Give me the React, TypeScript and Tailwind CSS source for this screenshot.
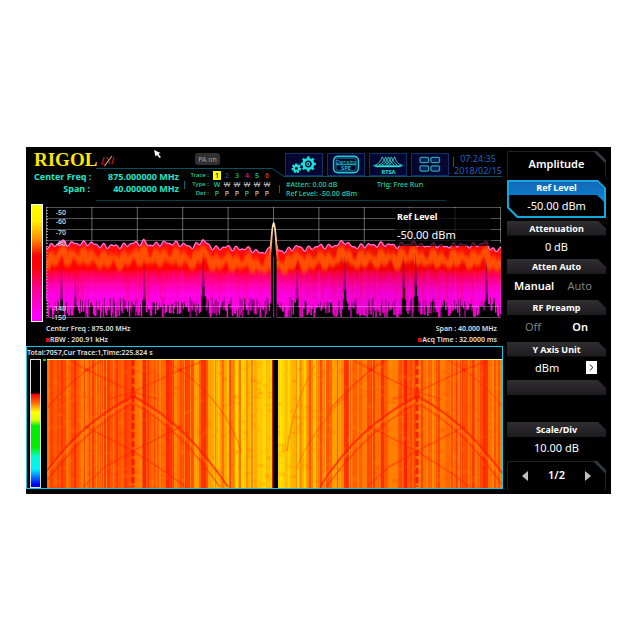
// App.tsx
import { ChevronRight } from "lucide-react";

// small seeded generator, keeps the traces stable between renders
function seeded(seed: number) {
  let s = seed;
  return () => {
    s = (s * 16807) % 2147483647;
    return s / 2147483647;
  };
}

const traces = [
  { id: "1", color: "bg-[#ffff00] text-black", type: "W", on: true, det: "text-[#19d6a8]" },
  { id: "2", color: "text-[#2450a8]", type: "W", on: false, det: "text-[#c8c8c8]" },
  { id: "3", color: "text-[#12c832]", type: "W", on: false, det: "text-[#c8c8c8]" },
  { id: "4", color: "text-[#e010d8]", type: "W", on: false, det: "text-[#19d6a8]" },
  { id: "5", color: "text-[#19d6a8]", type: "W", on: false, det: "text-[#c8c8c8]" },
  { id: "6", color: "text-[#d84a1c]", type: "W", on: false, det: "text-[#c8c8c8]" },
];

/* ---------- Spectrum data (plot is 456 x 112) ---------- */

const envelope: [number, number][] = [
  [0, 38], [14, 36], [30, 36], [50, 36], [61, 39], [80, 37], [98, 35], [108, 38], [121, 34], [134, 37],
  [148, 38], [157, 35], [170, 40], [194, 40], [214, 44], [224, 43], [233, 43], [251, 41], [275, 39],
  [299, 36], [314, 39], [334, 36], [348, 38], [358, 37], [374, 37], [394, 38], [428, 37], [442, 37],
  [450, 43], [456, 39],
];
const spikes = [
  { x: 15, top: 78 }, { x: 29, top: 86 }, { x: 98, top: 80 }, { x: 157, top: 66 }, { x: 251, top: 78 },
  { x: 299, top: 70 }, { x: 358, top: 68 }, { x: 370, top: 66 }, { x: 441, top: 72 },
];

function level(x: number) {
  let i = 0;
  while (i < envelope.length - 2 && envelope[i + 1][0] < x) i++;
  const [x0, y0] = envelope[i];
  const [x1, y1] = envelope[i + 1];
  return y0 + ((y1 - y0) * (x - x0)) / (x1 - x0);
}
const ripple = (x: number) => Math.sin(x * 0.95) * 1.3 + Math.sin(x * 0.61 + 1) * 1.5 + Math.sin(x * 0.27) * 0.8;

function buildSpectrum() {
  const rnd = seeded(71);
  const columns: { x: number; y: number; b: number; o: number }[] = [];
  const top: string[] = [];
  const mid: string[] = [];
  for (let x = 0; x <= 456; x++) {
    const lift = Math.max(0, ...spikes.map((s) => 1 - Math.abs(x - s.x) / 5));
    const y = level(x) + 1 + ripple(x) - lift * 2;
    const center = Math.abs(x - 228);
    const peak = center < 6 ? y - 27 * Math.exp(-(center * center) / 5) : y;
    top.push(`${x},${peak.toFixed(1)}`);
    mid.push(`${x},${(level(x) + 15 + ripple(x) * 2.4 - lift * 5).toFixed(1)}`);
    let b = 94 + rnd() * 18 + Math.sin(x * 0.5) * 3;
    for (const s of spikes) {
      const d = Math.abs(x - s.x);
      if (d < 3) b = Math.min(b, s.top + d * 11 + rnd() * 4);
    }
    columns.push({ x, y: peak, b: Math.min(b, 110), o: rnd() });
  }
  return { columns, top: top.join(" "), mid: mid.join(" ") };
}
const spectrum = buildSpectrum();

function SpectrumPlot() {
  return (
    <svg viewBox="0 0 456 112" preserveAspectRatio="none" className="block h-28 w-full" aria-label="Spectrum trace">
      <defs>
        <linearGradient id="density" gradientUnits="userSpaceOnUse" x1="0" y1="34" x2="0" y2="110">
          <stop offset="0" stopColor="#ff0038" />
          <stop offset="0.1" stopColor="#ff1000" />
          <stop offset="0.36" stopColor="#ff0000" />
          <stop offset="0.46" stopColor="#ff0060" />
          <stop offset="0.58" stopColor="#ff00b0" />
          <stop offset="0.7" stopColor="#ff00e8" />
          <stop offset="1" stopColor="#ff00d8" />
        </linearGradient>
        <linearGradient id="carrier" gradientUnits="userSpaceOnUse" x1="0" y1="15" x2="0" y2="56">
          <stop offset="0" stopColor="#fff4c8" />
          <stop offset="0.5" stopColor="#f8b070" />
          <stop offset="1" stopColor="#ff2000" />
        </linearGradient>
        <filter id="glow" x="-2%" y="-30%" width="104%" height="160%">
          <feGaussianBlur stdDeviation="0.6 2" />
        </filter>
      </defs>

      {/* density columns */}
      {spectrum.columns.map((c) => (
        <rect key={c.x} x={c.x} y={c.y} width="1.5" height={c.b - c.y} fill="url(#density)" />
      ))}
      <polyline points={spectrum.mid} fill="none" stroke="#ff5c00" strokeWidth="6" strokeLinejoin="round" opacity="0.85" filter="url(#glow)" />
      {spectrum.columns.map((c) =>
        c.o > 0.6 ? (
          <rect key={c.x} x={c.x} y={56 + c.o * 10} width="1" height="28" fill={c.o > 0.85 ? "#ff0030" : "#ff00c0"} opacity="0.35" />
        ) : null
      )}
      {spectrum.columns.map((c) =>
        c.o < 0.2 ? <rect key={c.x} x={c.x} y={90 + c.o * 30} width="1" height="20" fill="#000000" opacity="0.5" /> : null
      )}
      {spikes.map((s) => (
        <path key={s.x} d={`M${s.x + 0.5} ${s.top - 22} l1.6 36 l-3.2 0 z`} fill="#700060" opacity="0.6" />
      ))}

      {/* grid */}
      <g stroke="#ffffff" strokeWidth="1">
        {Array.from({ length: 11 }, (_, i) => (
          <line key={i} x1="0" x2="456" y1={i * 11 + 0.5} y2={i * 11 + 0.5} strokeOpacity={i > 3 && i < 9 ? 0.03 : 0.32} />
        ))}
        {Array.from({ length: 11 }, (_, i) => (
          <g key={i}>
            <line x1={i * 45.5 + 0.5} x2={i * 45.5 + 0.5} y1="0" y2="36" strokeOpacity="0.4" />
            <line x1={i * 45.5 + 0.5} x2={i * 45.5 + 0.5} y1="36" y2="111" strokeOpacity="0.06" />
          </g>
        ))}
      </g>
      <line x1="0" x2="0" y1="0" y2="111" stroke="#909090" strokeWidth="4" strokeDasharray="1 2" />

      <polyline points={spectrum.top} fill="none" stroke="#ff30b0" strokeWidth="1.4" />
      <polyline points={spectrum.top} fill="none" stroke="#ffc8f0" strokeWidth="0.6" />

      {/* carrier */}
      <path d="M225.5 111 V44 L227 20 L229 20 L231 44 V111 Z" fill="#000000" />
      <path d="M224 52 C226 44 226 17 228.2 16 C230.4 17 230.4 44 232.4 52" fill="none" stroke="url(#carrier)" strokeWidth="1.8" />
      <line x1="228.2" x2="228.2" y1="50" y2="111" stroke="#555555" strokeWidth="1" />
    </svg>
  );
}

/* ---------- Waterfall (plot is 455 x 129) ---------- */

function heat(v: number) {
  // 0 = red, 1 = yellow
  const g = Math.round(Math.max(0, Math.min(1, v)) * 240);
  return `rgb(255,${g},0)`;
}

function buildStripes() {
  const rnd = seeded(407);
  const out: { x: number; w: number; fill: string }[] = [];
  let x = 0;
  while (x < 455) {
    const w = 1 + Math.floor(rnd() * 3);
    const d = Math.abs(x - 226);
    const base = d < 16 ? 0.86 : d < 40 ? 0.74 : d < 62 ? 0.63 : d < 80 ? 0.52 : 0.41;
    const swing = d < 16 ? 0.2 : 0.36;
    out.push({ x, w, fill: heat(base + (rnd() - 0.5) * swing) });
    x += w;
  }
  return out;
}
const stripes = buildStripes();

function buildSpecks() {
  const rnd = seeded(93);
  return Array.from({ length: 900 }, () => ({
    x: rnd() * 455,
    y: rnd() * 128,
    w: 3 + rnd() * 4,
    light: rnd() > 0.5,
  }));
}
const specks = buildSpecks();

// fixed carriers, darker than the noise around them
const carriers = [
  { x: 11, w: 8, o: 0.4 }, { x: 27, w: 2, o: 0.7 }, { x: 37, w: 1, o: 0.5 }, { x: 45, w: 2, o: 0.6 },
  { x: 50, w: 2, o: 0.4 }, { x: 67, w: 2, o: 0.5 }, { x: 96, w: 3, o: 0.95 }, { x: 107, w: 1, o: 0.5 },
  { x: 119, w: 3, o: 0.9 }, { x: 124, w: 3, o: 0.5 }, { x: 154, w: 5, o: 0.7 }, { x: 168, w: 1, o: 0.4 },
  { x: 182, w: 2, o: 0.65 }, { x: 192, w: 2, o: 0.35 }, { x: 204, w: 2, o: 0.35 }, { x: 249, w: 1, o: 0.4 },
  { x: 262, w: 2, o: 0.5 }, { x: 273, w: 2, o: 0.6 }, { x: 279, w: 6, o: 0.45 }, { x: 297, w: 5, o: 0.75 },
  { x: 334, w: 3, o: 0.7 }, { x: 357, w: 3, o: 1 }, { x: 389, w: 2, o: 0.4 }, { x: 404, w: 2, o: 0.5 },
  { x: 425, w: 2, o: 0.4 }, { x: 436, w: 5, o: 0.75 },
];

function Chirps({ x }: { x: number }) {
  return (
    <g transform={`translate(${x} 0)`} fill="none" stroke="#ff1c00">
      <path d="M-97 128 C-70 85 -40 58 0 37 C40 58 68 88 95 128" strokeWidth="2" opacity="0.7" />
      <path d="M-94 125 C-67 88 -39 61 0 40.500 C39 61 65 90 91 127" stroke="#ff8c00" strokeWidth="1.6" opacity="0.5" />
      <path d="M-91 128 C-65 93 -38 65 0 44 C38 65 62 93 87 128" strokeWidth="1.4" opacity="0.5" />
      <path d="M-62 2 L-46 11 L0 33 L24 40 M70 2 L47 11 L0 33 L-24 40" strokeWidth="1.6" opacity="0.4" />
      <path d="M-88 52 C-76 36 -62 24 -46 11 L-30 0" strokeWidth="1.6" opacity="0.4" />
      <path d="M30 0 L47 11 C68 26 96 52 108 92" strokeWidth="1.4" opacity="0.35" />
      <path d="M-47 68 L0 92 L34 114 L53 128 M47 68 L0 92 L-28 108 L-50 128" strokeWidth="1.6" opacity="0.4" />
      <g fill="#ff1400" stroke="none" opacity="0.6">
        <circle cx="-46" cy="11" r="1.8" />
        <circle cx="47" cy="11" r="1.8" />
        <circle cx="-47" cy="68" r="1.4" />
        <circle cx="47" cy="68" r="1.4" />
        <circle cx="0" cy="36" r="3" />
      </g>
      <line x1="0" x2="0" y1="1" y2="128" strokeWidth="3" strokeDasharray="6 3" stroke="#ff0800" opacity="0.85" />
      <line x1="0" x2="0" y1="1" y2="128" strokeWidth="2" stroke="#ff2000" opacity="0.4" />
    </g>
  );
}

function WaterfallPlot() {
  return (
    <svg viewBox="0 0 455 129" preserveAspectRatio="none" className="block h-[129px] w-full" aria-label="Waterfall">
      {stripes.map((s) => (
        <rect key={s.x} x={s.x} y="0" width={s.w + 0.1} height="129" fill={s.fill} />
      ))}
      {carriers.map((c) => (
        <rect key={c.x} x={c.x} y="0" width={c.w} height="129" fill="#ff2000" opacity={c.o} />
      ))}
      {specks.map((s, i) => (
        <rect key={i} x={s.x} y={s.y} width={s.w} height="3" fill={s.light ? "#ffa000" : "#ff4000"} opacity="0.13" />
      ))}
      <path d="M240 92 C244 62 254 30 268 6" fill="none" stroke="#ff6000" strokeWidth="1.4" opacity="0.5" />
      <path d="M250 108 C262 78 288 44 330 4" fill="none" stroke="#ff3000" strokeWidth="1.4" opacity="0.3" />
      <Chirps x={86} />
      <Chirps x={370} />
      <rect x="226" y="0" width="5" height="129" fill="#000000" />
      <rect x="225" y="0" width="1" height="129" fill="#c02800" />
      <rect x="0" y="0" width="455" height="1" fill="#ffffa0" />
    </svg>
  );
}

/* ---------- Header icons ---------- */

function Gear({ cx, cy, r, body, teeth }: { cx: number; cy: number; r: number; body: number; teeth: number }) {
  return (
    <g transform={`translate(${cx} ${cy})`} stroke="#14e4dc">
      <circle r={r} fill="none" strokeWidth={body} />
      {Array.from({ length: teeth }, (_, i) => (
        <line key={i} x1="0" x2="0" y1={-r} y2={-r - body / 2 - 1.6} strokeWidth="2.6" transform={`rotate(${(360 / teeth) * i})`} />
      ))}
    </g>
  );
}

const headerButtons = [
  {
    label: "System settings",
    art: (
      <>
        <Gear cx={23} cy={10.5} r={5} body={2.8} teeth={8} />
        <circle cx="23" cy="10.5" r="1.5" fill="none" stroke="#14e4dc" strokeWidth="1.2" />
        <Gear cx={10.5} cy={15} r={2.5} body={1.8} teeth={7} />
      </>
    ),
  },
  {
    label: "Density view",
    art: (
      <>
        <rect x="5.5" y="2.5" width="26" height="17" rx="4.5" fill="none" stroke="#20c8d0" strokeWidth="1.6" />
        <rect x="8" y="4.5" width="21" height="13" rx="2.5" fill="none" stroke="#168a98" strokeWidth="0.8" />
        <path d="M8 11.2 H29" stroke="#20c8d0" strokeWidth="1" />
        <text x="18.5" y="10" textAnchor="middle" fontSize="6" fill="#20d0d8">Density</text>
        <text x="18.5" y="17" textAnchor="middle" fontSize="6" fontWeight="700" fill="#20b8c0">SPE</text>
      </>
    ),
  },
  {
    label: "Measurement mode",
    art: (
      <>
        <path d="M3 12 H34 L31 13.6 H6 Z" fill="#28e0d0" stroke="#28e0d0" strokeWidth="0.5" />
        <path
          d="M5 11.5 Q10 10.5 12.5 3 Q15 9 19 11.5 M9 11.5 Q14 9.5 16 3 Q18 9.5 22 11.5 M12 11.5 Q17 9.5 19 3 Q21 9.5 25 11.5 M16 11.5 Q20 9.5 22 3 Q24 9.5 28 11.5 M19 11.5 Q23 9 25.500 3 Q27 10.5 33 11.5"
          fill="none"
          stroke="#28e0d0"
          strokeWidth="0.9"
        />
        <text x="19" y="20.6" textAnchor="middle" fontSize="6" fontWeight="700" fill="#28e0d0">RTSA</text>
      </>
    ),
  },
  {
    label: "Window layout",
    art: (
      <g fill="#04205c" stroke="#30a0a8" strokeWidth="1.3">
        <rect x="8" y="3.5" width="9" height="5.6" rx="1.4" />
        <rect x="19.5" y="3.5" width="9" height="5.6" rx="1.4" />
        <rect x="8" y="12.4" width="9" height="5.6" rx="1.4" />
        <rect x="19.5" y="12.4" width="9" height="5.6" rx="1.4" />
      </g>
    ),
  },
];

/* ---------- Side menu ---------- */

function MenuTitle({ children }: { children?: string }) {
  return (
    <span className="flex h-[15px] w-full items-center justify-center bg-gradient-to-b from-[#302e32] to-[#1c1b1d] text-[9px] leading-none font-bold text-white [clip-path:polygon(0_0,calc(100%-8px)_0,100%_8px,100%_100%,0_100%)]">
      {children}
    </span>
  );
}

function App() {
  return (
    <div className="min-h-screen bg-white pt-[147px] pr-[29px] pl-[26px] font-['Noto_Sans','Open_Sans',sans-serif]">
      <main className="flex gap-1 bg-black pr-[5px] pb-1">
        {/* Measurement area */}
        <div className="min-w-0 flex-1">
          <header className="relative flex h-14">
            <svg viewBox="0 0 477 56" preserveAspectRatio="none" className="absolute inset-0 h-full w-full" aria-hidden="true">
              <g fill="none" stroke="#0a6478" strokeWidth="1">
                <path d="M70 21.500 H246 L258 29.500 H476" strokeOpacity="0.8" />
                <path d="M70 53.500 H420" strokeOpacity="0.6" />
                <path d="M158.500 34 V42 M253.500 38 V46 M427.500 10 V20" />
              </g>
              <path d="M128 3 L134.500 6 L132.300 7 L135 10 L133.600 11 L131 8 L129.500 9.500 Z" fill="#ffffff" />
            </svg>

            {/* Frequency */}
            <div className="relative w-[153px] shrink-0 pl-2">
              <div className="flex h-6 items-center gap-1">
                <h1 className="font-['Liberation_Serif',serif] text-[19px] leading-none font-bold text-[#ffe600]">RIGOL</h1>
                <svg viewBox="0 0 16 12" className="mt-1 h-3 w-4" aria-label="LXI">
                  <path d="M3 2 L1 9 H4 M6 2 L9 9 M13 2 L11 9" fill="none" stroke="#b01818" strokeWidth="1.2" />
                  <path d="M3.500 11 L11 1" stroke="#ff9080" strokeWidth="1.1" />
                </svg>
              </div>
              <dl className="grid grid-cols-[56px_1fr] text-right text-[9px] leading-3 font-bold text-[#1ee8c8]">
                <dt className="whitespace-nowrap">Center Freq :</dt>
                <dd className="whitespace-nowrap">875.000000 MHz</dd>
                <dt>Span :</dt>
                <dd className="whitespace-nowrap">40.000000 MHz</dd>
              </dl>
            </div>

            {/* Traces */}
            <div className="relative w-[106px] shrink-0 pl-[10px]">
              <div className="flex h-6 items-center pl-[6px]">
                <button className="h-3 w-[25px] rounded-[3px] bg-[#303030] text-[7px] leading-none text-[#a0a0a0]">PA on</button>
              </div>
              <table className="ml-px table-fixed border-collapse text-center text-[7px] leading-[9px] font-medium text-[#19d6a8]">
                <tbody>
                  <tr>
                    <th scope="row" className="w-[22px] pr-[3px] text-right text-[6px] font-medium whitespace-nowrap">Trace :</th>
                    {traces.map((t) => (
                      <td key={t.id} className="w-[10px] p-0">
                        <span className={`mx-auto block w-2 ${t.color}`}>{t.id}</span>
                      </td>
                    ))}
                  </tr>
                  <tr>
                    <th scope="row" className="pr-[3px] text-right text-[6px] font-medium whitespace-nowrap">Type :</th>
                    {traces.map((t) => (
                      <td key={t.id} className={t.on ? "p-0" : "p-0 text-[#b0b0b0] line-through"}>{t.type}</td>
                    ))}
                  </tr>
                  <tr>
                    <th scope="row" className="pr-[3px] text-right text-[6px] font-medium whitespace-nowrap">Det :</th>
                    {traces.map((t) => (
                      <td key={t.id} className={`p-0 ${t.det}`}>P</td>
                    ))}
                  </tr>
                </tbody>
              </table>
            </div>

            {/* Toolbar */}
            <div className="relative min-w-0 flex-1">
              <div className="flex gap-1 pt-[6px]">
                {headerButtons.map((b) => (
                  <button key={b.label} aria-label={b.label} className="h-[23px] w-[38px] shrink-0 border border-[#0a3070] bg-[#020630]">
                    <svg viewBox="0 0 37 22" className="h-full w-full">{b.art}</svg>
                  </button>
                ))}
                <p className="flex-1 text-center text-[9px] leading-3 whitespace-nowrap text-[#2060c8]">
                  07:24:35
                  <br />
                  2018/02/15
                </p>
              </div>
              <div className="mt-[3px] grid grid-cols-[91px_1fr] pl-px text-[7px] leading-[9px] font-medium text-[#19d6a8]">
                <span>#Atten: 0.00 dB</span>
                <span>Trig: Free Run</span>
                <span className="col-span-2">Ref Level: -50.00 dBm</span>
              </div>
            </div>
          </header>

          {/* Spectrum */}
          <section className="h-[143px]">
            <div className="flex pt-px pl-[5px]">
              <div className="h-[118px] w-3 shrink-0 border border-white bg-[linear-gradient(#ffff00,#ffee00_14%,#ff8800_30%,#ff0000_44%,#ff0010_55%,#ff0090_72%,#ff00ff_95%)]" />
              <div className="relative ml-[3px] min-w-0 flex-1 pt-[3px] pr-[2px]">
                <SpectrumPlot />
                <div className="absolute inset-y-0 left-2 flex w-3 flex-col items-end pt-1 text-[7px] leading-[9px] font-medium text-[#e0e0e0]">
                  <span>-50</span>
                  <span>-60</span>
                  <span className="mt-[2px]">-70</span>
                  <span className="mt-[2px]">-80</span>
                  <span className="mt-auto">-140</span>
                  <span>-150</span>
                </div>
                <div className="absolute top-1 right-3 h-[38px] w-24 bg-black/70 pl-[2px] text-white">
                  <p className="text-[9px] leading-[18px] font-bold">Ref Level</p>
                  <p className="text-[11px] leading-[18px]">-50.00 dBm</p>
                </div>
              </div>
            </div>
            <div className="flex justify-between pr-[6px] pl-5 text-[7px] leading-[11px] font-semibold text-[#e0e0e0]">
              <div className="pt-px">
                <p>Center Freq : 875.00 MHz</p>
                <p className="flex items-center"><i className="h-1 w-1 bg-[#e01010]" />RBW : 200.91 kHz</p>
              </div>
              <div className="pt-px text-right">
                <p>Span : 40.000 MHz</p>
                <p className="flex items-center justify-end"><i className="h-1 w-1 bg-[#e01010]" />Acq Time : 32.0000 ms</p>
              </div>
            </div>
          </section>

          {/* Waterfall */}
          <section className="border border-[#10c8e8]">
            <p className="h-3 text-[7px] leading-3 font-semibold text-[#e0e0e0]">Total:7057,Cur Trace:1,Time:225.824 s</p>
            <div className="flex pl-[3px]">
              <div className="w-[11px] shrink-0 border border-[#e0e0e0] bg-[linear-gradient(#000_26%,#ff0000_27%,#ff7000_34%,#ffff00_41%,#e0ff00_47%,#00f000_52%,#00f000_69%,#00ffd0_76%,#00f0ff_86%,#0000ff_98%)]" />
              <div className="mr-px ml-[2px] h-[2px] w-[3px] bg-[#10d020]" />
              <div className="min-w-0 flex-1">
                <WaterfallPlot />
              </div>
            </div>
          </section>
        </div>

        {/* Soft keys */}
        <aside className="flex w-[99px] shrink-0 flex-col pt-1 text-white">
          <h2 className="relative mb-[3px] flex h-[26px] items-center justify-center text-[11px] font-semibold">
            Amplitude
            <svg viewBox="0 0 99 26" preserveAspectRatio="none" className="absolute inset-0 h-full w-full" aria-hidden="true">
              <path d="M0.500 26 V0.500 H88 L98.500 10 V26" fill="none" stroke="#202226" />
              <path d="M86 0 H90 L99 9 V13 Z" fill="#34363a" />
            </svg>
          </h2>

          <button className="mb-px block h-[38px] bg-[#10a8e0] p-[2px] [clip-path:polygon(0_0,calc(100%-8px)_0,100%_8px,100%_100%,10px_100%,0_calc(100%-10px))]">
            <span className="flex h-full flex-col bg-black [clip-path:polygon(0_0,calc(100%-7px)_0,100%_7px,100%_100%,9px_100%,0_calc(100%-9px))]">
              <span className="relative h-[13px] bg-gradient-to-b from-[#1468b8] to-[#0c78c8] text-[9px] leading-[11px] font-bold">
                Ref Level
                <svg viewBox="0 0 10 10" className="absolute top-full right-0 h-[7px] w-[7px]" aria-hidden="true">
                  <path d="M0 0 H10 V10 Z" fill="#0c80cc" />
                </svg>
              </span>
              <span className="flex-1 text-[11px] leading-[21px]">-50.00 dBm</span>
            </span>
          </button>

          <button className="block h-10 text-[11px]">
            <MenuTitle>Attenuation</MenuTitle>
            <span className="block leading-[22px]">0 dB</span>
          </button>

          <div className="h-[41px] text-[11px]">
            <MenuTitle>Atten Auto</MenuTitle>
            <div className="flex justify-between pr-[14px] pl-[7px] leading-6">
              <button aria-pressed="true" className="font-semibold">Manual</button>
              <button aria-pressed="false" className="text-[#808080]">Auto</button>
            </div>
          </div>

          <div className="h-10 text-[11px]">
            <MenuTitle>RF Preamp</MenuTitle>
            <div className="flex justify-between pr-[18px] pl-[18px] leading-6">
              <button aria-pressed="false" className="text-[#808080]">Off</button>
              <button aria-pressed="true" className="font-semibold">On</button>
            </div>
          </div>

          <button className="block h-10 text-[11px]">
            <MenuTitle>Y Axis Unit</MenuTitle>
            <span className="flex items-center justify-between pr-[9px] pl-7 leading-[22px]">
              dBm
              <i className="flex h-[13px] w-[11px] items-center justify-center bg-white text-black">
                <ChevronRight className="h-[11px] w-[11px]" />
              </i>
            </span>
          </button>

          <div className="h-10">
            <MenuTitle />
          </div>

          <button className="block h-[41px] text-[11px]">
            <MenuTitle>Scale/Div</MenuTitle>
            <span className="block leading-[22px]">10.00 dB</span>
          </button>

          <nav className="relative flex h-[29px] items-center justify-between px-[15px] text-[11px] font-semibold">
            <svg viewBox="0 0 99 29" preserveAspectRatio="none" className="absolute inset-0 h-full w-full" aria-hidden="true">
              <path d="M0.500 29 V0.500 H88 L98.500 10 V29" fill="none" stroke="#202226" />
              <path d="M86 0 H90 L99 9 V13 Z" fill="#2a3a40" />
            </svg>
            <button aria-label="Previous page" className="relative">
              <svg viewBox="0 0 6 10" className="h-[10px] w-[6px]"><path d="M6 0 V10 L0 5 Z" fill="#c0c0c0" /></svg>
            </button>
            <span className="relative">1/2</span>
            <button aria-label="Next page" className="relative">
              <svg viewBox="0 0 6 10" className="h-[10px] w-[6px]"><path d="M0 0 V10 L6 5 Z" fill="#c0c0c0" /></svg>
            </button>
          </nav>
        </aside>
      </main>
    </div>
  );
}

export default App;
